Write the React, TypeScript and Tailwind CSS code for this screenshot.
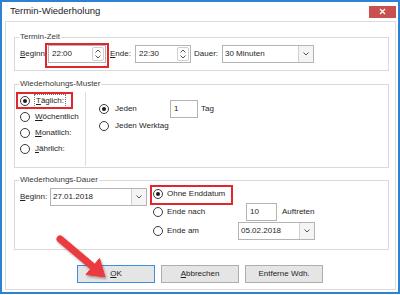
import React from "react";

const FONT = { fontFamily: '"Liberation Sans", Arial, sans-serif' };

function Radio({ checked }: { checked?: boolean }) {
  return (
    <span className="w-[10px] h-[10px] rounded-full border border-[#3a3a3a] bg-white flex items-center justify-center shrink-0">
      {checked && <span className="w-[4px] h-[4px] rounded-full bg-[#1a1a1a]" />}
    </span>
  );
}

function Chevron({ up }: { up?: boolean }) {
  return (
    <svg width="6" height="4" viewBox="0 0 6 4">
      <path
        d={up ? "M0.5 3.5 L3 1 L5.5 3.5" : "M0.5 0.5 L3 3 L5.5 0.5"}
        fill="none"
        stroke="#555"
        strokeWidth="1"
      />
    </svg>
  );
}

function TimeInput({ value, width }: { value: string; width: string }) {
  return (
    <div className={`${width} h-[18px] border border-[#b4b4b4] bg-white flex items-stretch`}>
      <span className="flex-1 flex items-center pl-[3px]">{value}</span>
      <div className="w-[12px] my-[1px] mr-[1px] border border-[#d0d0d0] rounded-[2px] flex flex-col items-center justify-center gap-[2px]">
        <Chevron up />
        <Chevron />
      </div>
    </div>
  );
}

function Combo({ value, width }: { value: string; width: string }) {
  return (
    <div className={`${width} h-[18px] border border-[#b4b4b4] bg-white flex items-stretch`}>
      <span className="flex-1 flex items-center pl-[2px]">{value}</span>
      <div className="w-[15px] border-l border-[#d0d0d0] bg-[#f4f4f4] flex items-center justify-center">
        <Chevron />
      </div>
    </div>
  );
}

function TextBox({ value, width }: { value: string; width: string }) {
  return (
    <div className={`${width} h-[18px] border border-[#b4b4b4] bg-white flex items-center pl-[3px]`}>
      {value}
    </div>
  );
}

function Group({ title, height, children }: { title: string; height: string; children: React.ReactNode }) {
  return (
    <div className={`relative ml-[8px] mr-[6px] ${height} border border-[#dadada] bg-white`}>
      <span className="absolute -top-[6px] left-[4px] bg-white px-[1px] leading-[10px] text-[#3a3a3a]">
        {title}
      </span>
      {children}
    </div>
  );
}

function Highlight({ className }: { className: string }) {
  return <div className={`absolute border-2 border-[#e3262c] pointer-events-none ${className}`} />;
}

export default function App() {
  return (
    <div className="relative w-[400px] h-[295px] bg-white text-[8px] text-[#1e1e1e]" style={FONT}>
      <div className="w-[400px] h-[294px] border-2 border-[#2d82d2] flex flex-col">
        {/* title bar */}
        <div className="h-[19px] flex items-center justify-between">
          <span className="pl-[8px] text-[9.5px] text-[#222]">Termin-Wiederholung</span>
          <div className="w-[27px] h-[12px] mr-[2px] bg-[#c9504f] flex items-center justify-center">
            <svg width="7" height="7" viewBox="0 0 7 7">
              <path d="M1 1 L6 6 M6 1 L1 6" stroke="#fff" strokeWidth="1.3" />
            </svg>
          </div>
        </div>

        {/* body */}
        <div className="flex-1 ml-[3px] mr-[2px] mb-[2px] border border-[#dcdcdc] bg-white flex flex-col">
          {/* Termin-Zeit */}
          <div className="mt-[15px]">
            <Group title="Termin-Zeit" height="h-[34px]">
              <div className="mt-[7px] h-[18px] pl-[5px] flex items-center">
                <span className="w-[28px]">
                  <u>B</u>eginn:
                </span>
                <div className="relative">
                  <TimeInput value="22:00" width="w-[58px]" />
                  <Highlight className="-left-[3px] -right-[3px] -top-[2px] -bottom-[5px]" />
                </div>
                <span className="w-[25px] ml-[4px]">
                  <u>E</u>nde:
                </span>
                <TimeInput value="22:30" width="w-[56px]" />
                <span className="w-[28px] ml-[3px]">Dauer:</span>
                <Combo value="30 Minuten" width="w-[92px]" />
              </div>
            </Group>
          </div>

          {/* Wiederholungs-Muster */}
          <div className="mt-[13px]">
            <Group title="Wiederholungs-Muster" height="h-[84px]">
              <div className="flex h-full">
                <div className="w-[70px] pl-[5px] pt-[8px] flex flex-col">
                  <div className="h-[16px] flex items-center">
                    <span className="relative h-[16px] inline-flex items-center gap-[5px]">
                      <Radio checked />
                      <span className="outline outline-1 outline-dotted outline-[#777] px-[1px]">
                        <u>T</u>äglich:
                      </span>
                      <Highlight className="-left-[4px] -right-[8px] -top-[1px] bottom-0" />
                    </span>
                  </div>
                  <div className="h-[16px] flex items-center gap-[5px]">
                    <Radio />
                    <span>
                      <u>W</u>öchentlich
                    </span>
                  </div>
                  <div className="h-[16px] flex items-center gap-[5px]">
                    <Radio />
                    <span>
                      <u>M</u>onatlich:
                    </span>
                  </div>
                  <div className="h-[16px] flex items-center gap-[5px]">
                    <Radio />
                    <span>
                      <u>J</u>ährlich:
                    </span>
                  </div>
                </div>
                <div className="w-px mt-[7px] mb-[1px] bg-[#dcdcdc]" />
                <div className="pl-[13px] pt-[15px] flex flex-col">
                  <div className="h-[18px] flex items-center">
                    <Radio checked />
                    <span className="w-[55px] ml-[6px]">Jeden</span>
                    <TextBox value="1" width="w-[28px]" />
                    <span className="ml-[3px]">Tag</span>
                  </div>
                  <div className="h-[16px] flex items-center">
                    <Radio />
                    <span className="ml-[6px]">Jeden Werktag</span>
                  </div>
                </div>
              </div>
            </Group>
          </div>

          {/* Wiederholungs-Dauer */}
          <div className="mt-[12px]">
            <Group title="Wiederholungs-Dauer" height="h-[70px]">
              <div className="flex items-start">
                <div className="mt-[7px] pl-[5px] h-[18px] flex items-center">
                  <span className="w-[30px]">
                    <u>B</u>eginn:
                  </span>
                  <Combo value="27.01.2018" width="w-[97px]" />
                </div>
                <div className="ml-[6px] mt-[5px] flex flex-col gap-[1px]">
                  <div className="h-[16px] flex items-center">
                    <span className="relative h-[16px] inline-flex items-center">
                      <Radio checked />
                      <span className="ml-[4px]">Ohne Enddatum</span>
                      <Highlight className="-left-[3px] -right-[8px] -top-[1px] -bottom-[3px]" />
                    </span>
                  </div>
                  <div className="h-[18px] flex items-center">
                    <Radio />
                    <span className="w-[79px] ml-[4px]">Ende nach</span>
                    <TextBox value="10" width="w-[31px]" />
                    <span className="ml-[5px]">Auftreten</span>
                  </div>
                  <div className="h-[18px] flex items-center">
                    <Radio />
                    <span className="w-[71px] ml-[4px]">Ende am</span>
                    <Combo value="05.02.2018" width="w-[77px]" />
                  </div>
                </div>
              </div>
            </Group>
          </div>

          {/* buttons */}
          <div className="mt-[15px] pl-[71px] flex gap-[6px]">
            <button className="w-[78px] h-[18px] border border-[#3d8ee0] bg-[#e5e5e5] flex items-center justify-center">
              <span>
                <u>O</u>K
              </span>
            </button>
            <button className="w-[78px] h-[18px] border border-[#adadad] bg-[#e5e5e5] flex items-center justify-center">
              <span>
                <u>A</u>bbrechen
              </span>
            </button>
            <button className="w-[78px] h-[18px] border border-[#adadad] bg-[#e5e5e5] flex items-center justify-center">
              Entferne Wdh.
            </button>
          </div>
        </div>
      </div>

      {/* red pointer arrow */}
      <svg className="absolute inset-0 pointer-events-none" width="400" height="295" viewBox="0 0 400 295">
        <defs>
          <filter id="sh" x="-20%" y="-20%" width="140%" height="140%">
            <feDropShadow dx="1" dy="1.5" stdDeviation="1.2" floodColor="#000" floodOpacity="0.35" />
          </filter>
        </defs>
        <g filter="url(#sh)" fill="#ea3a3f" stroke="#ea3a3f">
          <line x1="60" y1="239" x2="92" y2="266" strokeWidth="7" strokeLinecap="round" />
          <polygon points="105,277 86,274.5 99.5,258.5" strokeWidth="1" strokeLinejoin="round" />
        </g>
      </svg>
    </div>
  );
}
